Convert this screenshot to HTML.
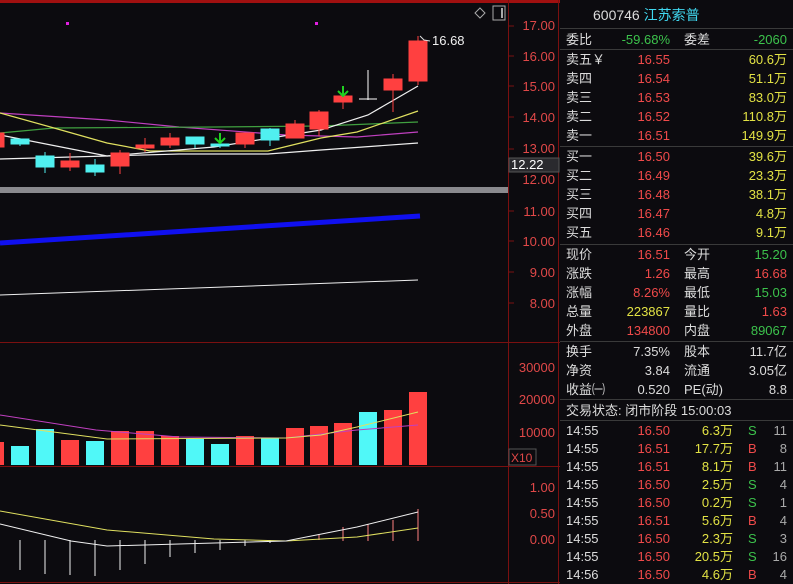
<!DOCTYPE html>
<html><head><meta charset="utf-8"><style>
body{margin:0;width:793px;height:584px;background:#0c0b0f;overflow:hidden;font-family:"Liberation Sans","Noto Sans CJK SC",sans-serif;position:relative}
svg{position:absolute;left:0;top:0}
#rp{position:absolute;left:560px;top:0;width:233px;height:584px;font-size:13px;color:#dcdcdc}
.r{position:absolute;left:0;width:233px;height:19px;line-height:19px;white-space:nowrap}
.r span{position:absolute}
.l1{left:6px}.v1{right:123px;text-align:right}.l2{left:124px}.v2{right:6px;text-align:right}
.t{left:6px}.p{right:123px}.q{right:60px}.s{left:188px}.c{right:6px;color:#aaa}
.R{color:#f04a4a}.G{color:#3cc24c}.Y{color:#e2e244}.W{color:#e0e0e0}
.hl{position:absolute;left:0;width:233px;height:1px;background:#3a3a3a}
</style></head><body>
<svg width="560" height="584" viewBox="0 0 560 584">
<rect x="0" y="0" width="793" height="3" fill="#a01010"/>
<line x1="508.5" y1="0" x2="508.5" y2="584" stroke="#7a1010"/>
<line x1="0" y1="342.5" x2="560" y2="342.5" stroke="#7a1010"/>
<line x1="0" y1="466.5" x2="560" y2="466.5" stroke="#7a1010"/>
<line x1="0" y1="582.5" x2="560" y2="582.5" stroke="#7a1010"/>
<line x1="558.5" y1="0" x2="558.5" y2="584" stroke="#7a1010"/>
<g fill="#e04848" font-size="13" text-anchor="end">
<text x="555" y="30">17.00</text><text x="555" y="61">16.00</text><text x="555" y="91">15.00</text><text x="555" y="122">14.00</text><text x="555" y="153">13.00</text><text x="555" y="184">12.00</text><text x="555" y="216">11.00</text><text x="555" y="246">10.00</text><text x="555" y="277">9.00</text><text x="555" y="308">8.00</text>
<text x="555" y="372">30000</text><text x="555" y="404">20000</text><text x="555" y="437">10000</text>
<text x="555" y="492">1.00</text><text x="555" y="518">0.50</text><text x="555" y="544">0.00</text>
</g>
<g stroke="#7a1010"><line x1="509" y1="26" x2="514" y2="26"/><line x1="509" y1="56" x2="514" y2="56"/><line x1="509" y1="86" x2="514" y2="86"/><line x1="509" y1="117" x2="514" y2="117"/><line x1="509" y1="149" x2="514" y2="149"/><line x1="509" y1="211" x2="514" y2="211"/><line x1="509" y1="241" x2="514" y2="241"/><line x1="509" y1="272" x2="514" y2="272"/><line x1="509" y1="303" x2="514" y2="303"/></g>
<rect x="509" y="158" width="50" height="14" fill="#2a2a2e" stroke="#555"/>
<text x="511" y="169" fill="#fff" font-size="13">12.22</text>
<rect x="509" y="449" width="27" height="16" fill="none" stroke="#555"/>
<text x="511" y="462" fill="#e04848" font-size="12">X10</text>
<rect x="0" y="187" width="508" height="6" fill="#8a8a8e"/>
<rect x="66" y="22" width="3" height="3" fill="#e020e0"/><rect x="315" y="22" width="3" height="3" fill="#e020e0"/>
<path d="M480 8 L485 13 L480 18 L475 13Z" fill="none" stroke="#aaa"/>
<rect x="493" y="6" width="12" height="14" fill="none" stroke="#aaa"/><rect x="501" y="8" width="2" height="10" fill="#aaa"/>
<!-- MAs -->
<g fill="none" stroke-width="1.2">
<polyline stroke="#c040c0" points="0,113 107,120 179,127 286,135 357,137 418,132"/>
<polyline stroke="#40a040" points="0,133 54,128 214,127 321,126 418,122"/>
<polyline stroke="#e0e060" points="0,113 54,128 107,143 150,151 268,151 321,138 357,132 418,111"/>
<polyline stroke="#f0f0f0" points="0,159 107,156 179,154 268,154 321,150 418,143"/>
<polyline stroke="#f0f0f0" points="0,135 107,156 214,147 321,130 368,115 418,86"/>
</g>
<!-- candles -->
<g stroke-width="1">
<g stroke="#ff4040" fill="#ff4040">
<rect x="0" y="133" width="4" height="14"/>
<line x1="70" y1="153" x2="70" y2="171"/><rect x="61" y="161" width="18" height="6"/>
<line x1="120" y1="150" x2="120" y2="174"/><rect x="111" y="153" width="18" height="13"/>
<line x1="145" y1="138" x2="145" y2="152"/><rect x="136" y="145" width="18" height="3"/>
<line x1="170" y1="133" x2="170" y2="148"/><rect x="161" y="138" width="18" height="7"/>
<line x1="245" y1="133" x2="245" y2="148"/><rect x="236" y="133" width="18" height="11"/>
<line x1="295" y1="120" x2="295" y2="138"/><rect x="286" y="124" width="18" height="14"/>
<line x1="319" y1="110" x2="319" y2="136"/><rect x="310" y="112" width="18" height="17"/>
<line x1="343" y1="96" x2="343" y2="109"/><rect x="334" y="96" width="18" height="6"/>
<line x1="393" y1="74" x2="393" y2="112"/><rect x="384" y="79" width="18" height="11"/>
<line x1="418" y1="36" x2="418" y2="85"/><rect x="409" y="41" width="18" height="40"/>
</g>
<g stroke="#50f0f0" fill="#50f0f0">
<line x1="20" y1="139" x2="20" y2="146"/><rect x="11" y="139" width="18" height="5"/>
<line x1="45" y1="152" x2="45" y2="173"/><rect x="36" y="156" width="18" height="11"/>
<line x1="95" y1="159" x2="95" y2="176"/><rect x="86" y="165" width="18" height="7"/>
<line x1="195" y1="137" x2="195" y2="148"/><rect x="186" y="137" width="18" height="7"/>
<line x1="220" y1="144" x2="220" y2="148"/><rect x="211" y="144" width="18" height="2"/>
<line x1="270" y1="128" x2="270" y2="146"/><rect x="261" y="129" width="18" height="11"/>
</g>
<line x1="368" y1="70" x2="368" y2="100" stroke="#fff"/><line x1="359" y1="99" x2="377" y2="99" stroke="#fff"/>
<g stroke="#20d020" stroke-width="2" fill="none"><path d="M220 133V143M215 138L220 143L225 138"/><path d="M343 86V96M338 91L343 96L348 91"/></g>
</g>
<path d="M420 36 L424 40 L430 41" stroke="#ddd" fill="none"/>
<text x="432" y="45" fill="#f0f0f0" font-size="13">16.68</text>
<line x1="0" y1="243" x2="420" y2="216" stroke="#1010f0" stroke-width="5"/>
<line x1="0" y1="295" x2="418" y2="280" stroke="#f0f0f0" stroke-width="1"/>
<!-- volume -->
<g fill="#ff4040"><rect x="0" y="442" width="4" height="23"/><rect x="61" y="440" width="18" height="25"/><rect x="111" y="431" width="18" height="34"/><rect x="136" y="431" width="18" height="34"/><rect x="161" y="436" width="18" height="29"/><rect x="236" y="436" width="18" height="29"/><rect x="286" y="428" width="18" height="37"/><rect x="310" y="426" width="18" height="39"/><rect x="334" y="423" width="18" height="42"/><rect x="384" y="410" width="18" height="55"/><rect x="409" y="392" width="18" height="73"/></g>
<g fill="#50f8f8"><rect x="11" y="446" width="18" height="19"/><rect x="36" y="429" width="18" height="36"/><rect x="86" y="441" width="18" height="24"/><rect x="186" y="439" width="18" height="26"/><rect x="211" y="444" width="18" height="21"/><rect x="261" y="438" width="18" height="27"/><rect x="359" y="412" width="18" height="53"/></g>
<polyline fill="none" stroke="#c040c0" points="0,415 96,430 179,437 286,438 357,430 418,425"/>
<polyline fill="none" stroke="#e0e060" points="0,425 107,439 286,438 321,435 357,427 418,412"/>
<!-- macd -->
<g stroke="#f0f0f0"><line x1="20" y1="540" x2="20" y2="570"/><line x1="45" y1="540" x2="45" y2="574"/><line x1="70" y1="540" x2="70" y2="575"/><line x1="95" y1="540" x2="95" y2="576"/><line x1="120" y1="540" x2="120" y2="570"/><line x1="145" y1="540" x2="145" y2="564"/><line x1="170" y1="540" x2="170" y2="557"/><line x1="195" y1="540" x2="195" y2="553"/><line x1="220" y1="540" x2="220" y2="550"/><line x1="245" y1="540" x2="245" y2="546"/><line x1="270" y1="540" x2="270" y2="543"/></g>
<g stroke="#ff8080"><line x1="319" y1="540" x2="319" y2="534"/><line x1="343" y1="541" x2="343" y2="527"/><line x1="368" y1="541" x2="368" y2="524"/><line x1="393" y1="541" x2="393" y2="520"/><line x1="418" y1="541" x2="418" y2="509"/></g>
<polyline fill="none" stroke="#e0e060" points="0,511 107,530 214,539 286,541 357,537 418,528"/>
<polyline fill="none" stroke="#f0f0f0" points="0,524 71,541 107,546 179,544 286,541 357,527 418,512"/>
</svg>
<div id="rp">
<div class="r" style="top:6px;font-size:14px"><span style="left:33px">600746 <span style="position:static;color:#40d8f0">江苏索普</span></span></div>
<div class="hl" style="top:28px"></div>
<div class="r" style="top:30px"><span class="l1">委比</span><span class="v1 G">-59.68%</span><span class="l2">委差</span><span class="v2 G">-2060</span></div>
<div class="hl" style="top:49px"></div>
<div class="r" style="top:50px"><span class="l1">卖五￥</span><span class="v1 R">16.55</span><span class="v2 Y">60.6万</span></div>
<div class="r" style="top:69px"><span class="l1">卖四</span><span class="v1 R">16.54</span><span class="v2 Y">51.1万</span></div>
<div class="r" style="top:88px"><span class="l1">卖三</span><span class="v1 R">16.53</span><span class="v2 Y">83.0万</span></div>
<div class="r" style="top:107px"><span class="l1">卖二</span><span class="v1 R">16.52</span><span class="v2 Y">110.8万</span></div>
<div class="r" style="top:126px"><span class="l1">卖一</span><span class="v1 R">16.51</span><span class="v2 Y">149.9万</span></div>
<div class="hl" style="top:146px"></div>
<div class="r" style="top:147px"><span class="l1">买一</span><span class="v1 R">16.50</span><span class="v2 Y">39.6万</span></div>
<div class="r" style="top:166px"><span class="l1">买二</span><span class="v1 R">16.49</span><span class="v2 Y">23.3万</span></div>
<div class="r" style="top:185px"><span class="l1">买三</span><span class="v1 R">16.48</span><span class="v2 Y">38.1万</span></div>
<div class="r" style="top:204px"><span class="l1">买四</span><span class="v1 R">16.47</span><span class="v2 Y">4.8万</span></div>
<div class="r" style="top:223px"><span class="l1">买五</span><span class="v1 R">16.46</span><span class="v2 Y">9.1万</span></div>
<div class="hl" style="top:244px"></div>
<div class="r" style="top:245px"><span class="l1">现价</span><span class="v1 R">16.51</span><span class="l2">今开</span><span class="v2 G">15.20</span></div>
<div class="r" style="top:264px"><span class="l1">涨跌</span><span class="v1 R">1.26</span><span class="l2">最高</span><span class="v2 R">16.68</span></div>
<div class="r" style="top:283px"><span class="l1">涨幅</span><span class="v1 R">8.26%</span><span class="l2">最低</span><span class="v2 G">15.03</span></div>
<div class="r" style="top:302px"><span class="l1">总量</span><span class="v1 Y">223867</span><span class="l2">量比</span><span class="v2 R">1.63</span></div>
<div class="r" style="top:321px"><span class="l1">外盘</span><span class="v1 R">134800</span><span class="l2">内盘</span><span class="v2 G">89067</span></div>
<div class="hl" style="top:341px"></div>
<div class="r" style="top:342px"><span class="l1">换手</span><span class="v1">7.35%</span><span class="l2">股本</span><span class="v2">11.7亿</span></div>
<div class="r" style="top:361px"><span class="l1">净资</span><span class="v1">3.84</span><span class="l2">流通</span><span class="v2">3.05亿</span></div>
<div class="r" style="top:380px"><span class="l1">收益㈠</span><span class="v1">0.520</span><span class="l2">PE(动)</span><span class="v2">8.8</span></div>
<div class="hl" style="top:399px"></div>
<div class="r" style="top:401px"><span class="l1">交易状态: 闭市阶段 15:00:03</span></div>
<div class="hl" style="top:420px"></div>
<div class="r" style="top:421px"><span class="t">14:55</span><span class="p R">16.50</span><span class="q Y">6.3万</span><span class="s G">S</span><span class="c">11</span></div>
<div class="r" style="top:439px"><span class="t">14:55</span><span class="p R">16.51</span><span class="q Y">17.7万</span><span class="s R">B</span><span class="c">8</span></div>
<div class="r" style="top:457px"><span class="t">14:55</span><span class="p R">16.51</span><span class="q Y">8.1万</span><span class="s R">B</span><span class="c">11</span></div>
<div class="r" style="top:475px"><span class="t">14:55</span><span class="p R">16.50</span><span class="q Y">2.5万</span><span class="s G">S</span><span class="c">4</span></div>
<div class="r" style="top:493px"><span class="t">14:55</span><span class="p R">16.50</span><span class="q Y">0.2万</span><span class="s G">S</span><span class="c">1</span></div>
<div class="r" style="top:511px"><span class="t">14:55</span><span class="p R">16.51</span><span class="q Y">5.6万</span><span class="s R">B</span><span class="c">4</span></div>
<div class="r" style="top:529px"><span class="t">14:55</span><span class="p R">16.50</span><span class="q Y">2.3万</span><span class="s G">S</span><span class="c">3</span></div>
<div class="r" style="top:547px"><span class="t">14:55</span><span class="p R">16.50</span><span class="q Y">20.5万</span><span class="s G">S</span><span class="c">16</span></div>
<div class="r" style="top:565px"><span class="t">14:56</span><span class="p R">16.50</span><span class="q Y">4.6万</span><span class="s R">B</span><span class="c">4</span></div>
</div>
</body></html>
